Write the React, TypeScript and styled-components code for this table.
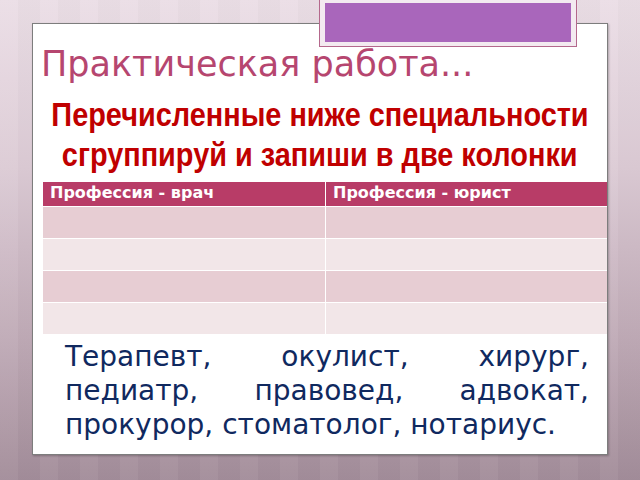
import React from "react";
import styled, { createGlobalStyle } from "styled-components";

const Global = createGlobalStyle`
  html, body { margin: 0; padding: 0; }
  body {
    width: 640px;
    height: 480px;
    overflow: hidden;
    background: linear-gradient(180deg, #ebdee6 0%, #dccbd5 35%, #c0abb7 70%, #a38d9a 100%);
  }
`;

const Page = styled.div`
  position: relative;
  width: 640px;
  height: 480px;
  padding: 23px 0 0 32px;
  box-sizing: border-box;
  background:
    repeating-linear-gradient(90deg, rgba(255,255,255,0.035) 0 18px, rgba(0,0,0,0.015) 18px 40px);
`;

const Badge = styled.div`
  position: absolute;
  left: 319px;
  top: -2px;
  width: 258px;
  height: 49px;
  box-sizing: border-box;
  border: 1px solid #b4688c;
  background: #f3eaf0;
  padding: 4px 5px 4px 5px;
  z-index: 2;
`;

const BadgeFill = styled.div`
  width: 100%;
  height: 100%;
  background: #a966bb;
`;

const Card = styled.div`
  width: 576px;
  height: 432px;
  box-sizing: border-box;
  background: #ffffff;
  border: 1px solid #7d7d7d;
  box-shadow: 1px 1px 2px rgba(0, 0, 0, 0.25);
  display: flex;
  flex-direction: column;
  padding: 0 0 0 10px;
`;

const Title = styled.h1`
  margin: 19px 0 0 -2px;
  font-family: "DejaVu Sans", Verdana, sans-serif;
  font-weight: normal;
  font-size: 35px;
  line-height: 42px;
  color: #b6466f;
  white-space: nowrap;
`;

const Heading = styled.div`
  margin: 10px 0 0 -10px;
  width: 574px;
  display: flex;
  flex-direction: column;
  align-items: center;
`;

const HeadingLine = styled.span`
  display: block;
  white-space: nowrap;
  font-family: "Liberation Sans", Arial, sans-serif;
  font-weight: bold;
  font-size: 33px;
  line-height: 40px;
  color: #c00000;
  transform: scaleX(0.875);
  transform-origin: center;
`;

const Table = styled.div`
  margin: 7px 0 0 0;
  width: 564px;
  display: grid;
  grid-template-columns: 282px 281px;
  row-gap: 1px;
  column-gap: 1px;
  background: #ffffff;
`;

const HeadCell = styled.div`
  height: 24px;
  background: #b83c67;
  color: #ffffff;
  font-family: "DejaVu Sans", Verdana, sans-serif;
  font-weight: bold;
  font-size: 16px;
  line-height: 22px;
  padding-left: 7px;
  white-space: nowrap;
`;

const Cell = styled.div<{ $odd: boolean }>`
  height: 31px;
  background: ${(p) => (p.$odd ? "#e7cdd3" : "#f2e6e8")};
`;

const Words = styled.p`
  margin: 6px 0 0 22px;
  width: 524px;
  font-family: "DejaVu Sans", Verdana, sans-serif;
  font-size: 28px;
  line-height: 34px;
  color: #10295f;
  text-align: justify;
`;

export default function App() {
  const rows = [0, 1, 2, 3];
  return (
    <>
      <Global />
      <Page>
        <Badge>
          <BadgeFill />
        </Badge>
        <Card>
          <Title>Практическая работа...</Title>
          <Heading>
            <HeadingLine>Перечисленные ниже специальности</HeadingLine>
            <HeadingLine>сгруппируй и запиши в две колонки</HeadingLine>
          </Heading>
          <Table>
            <HeadCell>Профессия - врач</HeadCell>
            <HeadCell>Профессия - юрист</HeadCell>
            {rows.map((r) => (
              <React.Fragment key={r}>
                <Cell $odd={r % 2 === 0} />
                <Cell $odd={r % 2 === 0} />
              </React.Fragment>
            ))}
          </Table>
          <Words>
            Терапевт, окулист, хирург, педиатр, правовед, адвокат, прокурор, стоматолог, нотариус.
          </Words>
        </Card>
      </Page>
    </>
  );
}
